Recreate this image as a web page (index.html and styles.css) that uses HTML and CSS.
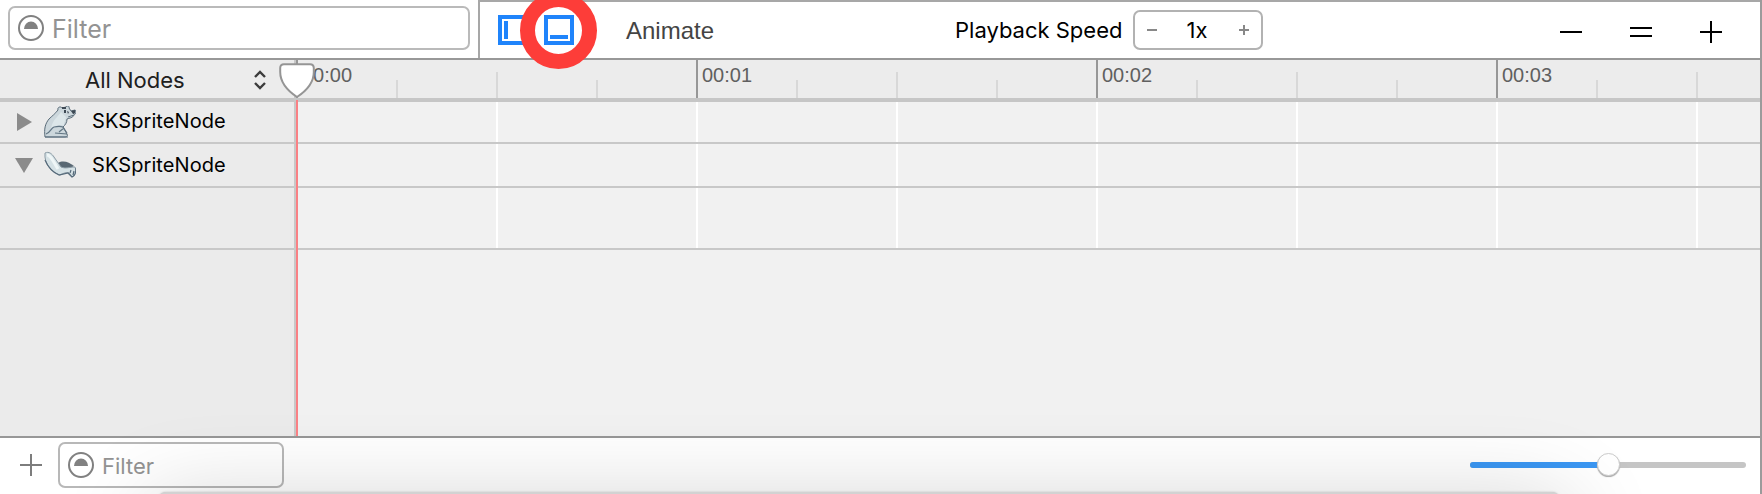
FILE: index.html
```html
<!DOCTYPE html>
<html lang="en">
<head>
<meta charset="utf-8">
<title>Timeline</title>
<link rel="stylesheet" href="styles.css">
</head>
<body>
<main class="editor">
  <header class="toolbar">
    <div class="filter-pane">
      <div class="filter">
        <svg class="filter-icon" width="26" height="26" viewBox="0 0 26 26"><circle cx="13" cy="13" r="12" fill="none" stroke="#818181" stroke-width="2"/><path d="M6 14a7 7.500 0 0 1 14 0z" fill="#818181"/></svg>
        <span>Filter</span>
      </div>
    </div>
    <div class="controls">
      <svg class="pane-icon" width="30" height="30" viewBox="0 0 30 30"><path d="M2 2h26v26H2z" fill="none" stroke="#1f84fb" stroke-width="4"/><path d="M6 6h4v18H6z" fill="#1f84fb"/></svg>
      <div class="pane-marked">
        <svg class="pane-icon" width="30" height="30" viewBox="0 0 30 30"><path d="M2 2h26v26H2z" fill="none" stroke="#1f84fb" stroke-width="4"/><path d="M6 20h18v4H6z" fill="#1f84fb"/></svg>
        <span class="marker"></span>
      </div>
      <span class="animate">Animate</span>
      <span class="speed-label">Playback Speed</span>
      <div class="stepper">
        <svg width="10" height="10" viewBox="0 0 10 10"><path d="M0 5h10" stroke="#888" stroke-width="2"/></svg>
        <span>1x</span>
        <svg width="10" height="10" viewBox="0 0 10 10"><path d="M0 5h10M5 0v10" stroke="#888" stroke-width="2"/></svg>
      </div>
      <div class="zoom-icons">
        <svg width="22" height="22" viewBox="0 0 22 22"><path d="M0 11h22" stroke="#000" stroke-width="2"/></svg>
        <svg width="22" height="22" viewBox="0 0 22 22"><path d="M0 7h22M0 15h22" stroke="#000" stroke-width="2"/></svg>
        <svg width="22" height="22" viewBox="0 0 22 22"><path d="M0 11h22M11 0v22" stroke="#000" stroke-width="2"/></svg>
      </div>
    </div>
  </header>
  <section class="timeline">
    <aside class="sidebar">
      <div class="nodes-menu">
        <span>All Nodes</span>
        <svg width="12" height="20" viewBox="0 0 12 20"><path d="M1 7l5-5 5 5M1 13l5 5 5-5" fill="none" stroke="#3c3c3c" stroke-width="2.4"/></svg>
      </div>
      <div class="node first">
        <svg class="arrow" width="18" height="18" viewBox="0 0 18 18"><path d="M2 0l15 9-15 9z" fill="#8b8b8b"/></svg>
        <svg class="thumb" width="32" height="32" viewBox="0 0 32 32">
          <path d="M14 4c-1-3 3-4 4-2l4-1c1-2 4-1 3 1l2 3 4-1c2 1 1 4-1 5-1 3-5 3-7 4 0 4-2 6-4 8l4 7c1 2 0 3-2 3H1C0 23 1 18 5 13c3-3 6-5 9-9z" fill="#ccd7dc" stroke="#596b78" stroke-width="1"/>
          <path d="M17 6c-3 5-8 7-10 16l4-1c4-3 7-2 9-1 0-5 2-6 2-9z" fill="#dce6e9"/>
          <path d="M2 28c4-1 5-6 8-7 5-1 6-1 9 0M15 26l5-4M11 27l12 1M19 21l4 6M1 31h23" fill="none" stroke="#617583" stroke-width="1.2"/>
          <path d="M27 5l4-1c1 2 0 4-2 4zM20 4h2v3h-2zM23 5l2 1-1 2zM18 1h4v2h-4z" fill="#3d4954"/>
          <path d="M24 11l6-2" stroke="#637480"/>
        </svg>
        <span>SKSpriteNode</span>
      </div>
      <div class="node">
        <svg class="arrow" width="18" height="18" viewBox="0 0 18 18"><path d="M0 2h18L9 17z" fill="#8b8b8b"/></svg>
        <svg class="thumb" width="32" height="32" viewBox="0 0 32 32">
          <path d="M14 14c5-3 11-1 16 3l-5 3H14z" fill="#596873"/>
          <path d="M1 4c4-2 7 1 9 4l7 10c5 2 8 0 14 0 2 5 0 9-3 10l-3-4c-3-1-5 0-9 2C7 23 0 15 1 4z" fill="#d5e1e5" stroke="#8b9ba5" stroke-width="1"/>
          <path d="M3 6c4 0 7 8 11 14" fill="none" stroke="#eff6f7" stroke-width="3"/>
          <path d="M1 11c3 7 7 12 14 15l9-2 4 4c3-1 4-5 4-9M26 24l1-3M29 26l1-4" fill="none" stroke="#566a7a" stroke-width="1.2"/>
        </svg>
        <span>SKSpriteNode</span>
      </div>
      <div class="node-detail"></div>
    </aside>
    <div class="tracks">
      <div class="ruler">
        <div class="second"><time>00:00</time><i></i><i></i><i></i></div>
        <div class="second"><time>00:01</time><i></i><i></i><i></i></div>
        <div class="second"><time>00:02</time><i></i><i></i><i></i></div>
        <div class="second"><time>00:03</time><i></i><i></i><i></i></div>
      </div>
      <div class="track first"></div>
      <div class="track"></div>
      <div class="track tall"></div>
      <div class="playhead">
        <svg width="36" height="36" viewBox="0 0 36 36"><path d="M5 1.200h26q3.800 0 3.800 4v4C34.800 20 27 28 18 34 9 28 1.200 20 1.200 9v-4q0-3.800 3.800-3.800z" fill="#fff" stroke="#959595" stroke-width="2"/></svg>
      </div>
    </div>
  </section>
  <footer class="bottom-bar">
    <svg width="22" height="22" viewBox="0 0 22 22"><path d="M0 11h22M11 0v22" stroke="#7d7d7d" stroke-width="2"/></svg>
    <div class="filter small">
      <svg class="filter-icon" width="26" height="26" viewBox="0 0 26 26"><circle cx="13" cy="13" r="12" fill="none" stroke="#818181" stroke-width="2"/><path d="M6 14a7 7.500 0 0 1 14 0z" fill="#818181"/></svg>
      <span>Filter</span>
    </div>
    <div class="slider"><span class="slider-fill"></span><span class="knob"></span></div>
  </footer>
  <div class="window-shadow"></div>
</main>
</body>
</html>
```
FILE: styles.css
```css
* { box-sizing: border-box; }
body { margin: 0; background: #fff; font-family: Inter, "Liberation Sans", sans-serif; }
svg { display: block; flex: none; }
.editor { position: relative; width: 1762px; height: 494px; overflow: hidden; border-right: 2px solid #9b9b9b; display: flex; flex-direction: column; }
.toolbar { height: 60px; display: flex; border-bottom: 2px solid #989898; }
.filter-pane { width: 478px; padding: 6px 8px; }
.filter { height: 44px; width: 462px; border: 2px solid #bababa; border-radius: 7px; display: flex; align-items: center; padding-left: 8px; gap: 8px; color: #939393; font-size: 25px; }
.filter span { padding-top: 2px; }
.controls { flex: 1; border-left: 2px solid #a7a7a7; border-top: 2px solid #a7a7a7; display: flex; align-items: center; padding: 0 38px 0 18px; }
.pane-marked { position: relative; margin-left: 16px; }
.marker { position: absolute; left: -24px; top: -23px; width: 77px; height: 77px; border: 15px solid #fd3d39; border-radius: 50%; z-index: 4; }
.animate { margin-left: 52px; padding-top: 2px; width: 329px; font: 24px "Liberation Sans", Arial, sans-serif; color: #444; }
.speed-label { width: 178px; font-size: 22px; white-space: nowrap; }
.stepper { width: 130px; height: 40px; border: 2px solid #b2b2b2; border-radius: 7px; display: flex; align-items: center; justify-content: space-between; padding: 0 12px; font-size: 22px; }
.stepper span { padding-right: 2px; }
.zoom-icons { margin-left: auto; display: flex; gap: 48px; padding-top: 4px; }
.timeline { height: 378px; display: flex; border-bottom: 2px solid #979797; }
.sidebar { width: 296px; flex: none; background: #ebebeb; border-right: 2px solid #c8c8c8; }
.nodes-menu { height: 42px; border-bottom: 4px solid #c6c6c6; background: #ececec; display: flex; align-items: center; justify-content: space-between; padding: 2px 28px 0 85px; font-size: 22px; color: #202020; }
.node { height: 44px; border-bottom: 2px solid #c8c8c8; display: flex; align-items: center; padding-left: 15px; font-size: 20px; letter-spacing: .08px; }
.node.first { height: 42px; }
.node.first span { padding-bottom: 2px; }
.thumb { margin: 0 16px 0 11px; }
.node-detail { height: 62px; border-bottom: 2px solid #c8c8c8; }
.tracks { position: relative; flex: 1; min-width: 0; background: #f1f1f1; }
.ruler { height: 42px; border-bottom: 4px solid #c6c6c6; background: #ececec; display: flex; overflow: hidden; }
.second { width: 400px; height: 38px; flex: none; border-left: 2px solid #979797; display: grid; grid-template-columns: 98px 100px 100px 100px; align-items: end; }
.second time { align-self: start; padding: 3px 0 0 4px; font: 20px/24px "Liberation Sans", Arial, sans-serif; color: #606060; }
.second i { height: 18px; border-left: 2px solid #d8d8d8; }
.second i:nth-of-type(2) { height: 26px; }
.track { height: 44px; border-bottom: 2px solid #c8c8c8; background: repeating-linear-gradient(90deg, #fff 0 2px, transparent 2px 200px); background-clip: content-box; }
.track.first { height: 42px; }
.track.tall { height: 62px; }
.playhead { position: absolute; left: -17px; top: 3px; height: 373px; width: 36px; z-index: 2; }
.playhead::after { content: ""; position: absolute; left: 17px; top: 37px; bottom: 0; width: 2px; background: #fa8084; }
.bottom-bar { height: 56px; display: flex; align-items: center; padding: 0 14px 2px 20px; }
.filter.small { width: 226px; height: 46px; margin: 0 0 0 16px; font-size: 22px; border-color: #b8b8b8; }
.slider { position: relative; width: 276px; height: 6px; margin-left: auto; border-radius: 3px; background: #c5c5c5; }
.slider-fill { display: block; width: 138px; height: 6px; border-radius: 3px 0 0 3px; background: #3b97f3; }
.knob { position: absolute; left: 127px; top: -9px; width: 23px; height: 23px; border-radius: 50%; background: #fff; border: 1px solid #cdcdcd; box-shadow: 0 1px 1px #aaa; }
.window-shadow { position: absolute; left: 158px; top: 492px; width: 1402px; height: 60px; border-radius: 8px; background: #d2d2d2; box-shadow: 0 0 2px #bbb, 0 20px 90px 10px rgba(0,0,0,.19); pointer-events: none; }
```
